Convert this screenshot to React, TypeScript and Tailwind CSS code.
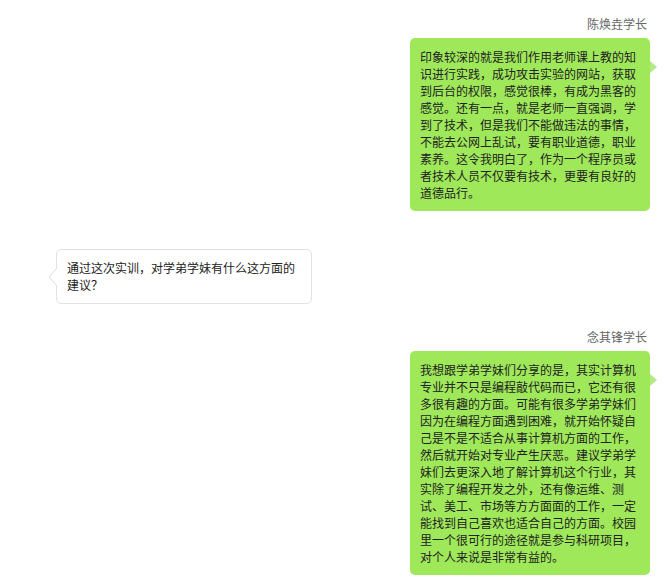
const FONT = "font-['SimSun','Noto_Sans_CJK_SC',sans-serif]";

function RightMessage({ name, text, className = "" }: { name: string; text: string; className?: string }) {
  return (
    <div className={`flex flex-col items-end pr-[20px] ${className}`}>
      <div className="pr-[3px] text-[12px] leading-[20px] text-[#666]">{name}</div>
      <div className="relative mt-[4px] w-[240px] rounded-[5px] bg-[#9fe85a] px-[10px] py-[10px] text-[12px] leading-[17px] text-[#222]">
        {text}
        <span className="absolute right-[-7px] top-[23px] h-0 w-0 border-y-[6px] border-l-[7px] border-y-transparent border-l-[#b4ea86]" />
      </div>
    </div>
  );
}

function LeftMessage({ text, className = "" }: { text: string; className?: string }) {
  return (
    <div className={`pl-[56px] ${className}`}>
      <div className="relative w-[256px] rounded-[5px] border border-[#e2e2e2] bg-white pb-[10px] pl-[10px] pr-[10px] pt-[9px] text-[12px] leading-[17px] text-[#222]">
        {text}
        <svg className="absolute left-[-9px] top-[18px]" width="9" height="18" viewBox="0 0 9 18">
          <polyline points="9,0 1,9 9,18" fill="#fff" stroke="#dcdcdc" strokeWidth="1" />
          <rect x="8.5" y="1" width="1" height="16" fill="#fff" />
        </svg>
      </div>
    </div>
  );
}

export default function App() {
  return (
    <div className={`min-h-[579px] w-[670px] bg-white pt-[14px] ${FONT}`}>
      <RightMessage
        name="陈焕垚学长"
        text="印象较深的就是我们作用老师课上教的知识进行实践，成功攻击实验的网站，获取到后台的权限，感觉很棒，有成为黑客的感觉。还有一点，就是老师一直强调，学到了技术，但是我们不能做违法的事情，不能去公网上乱试，要有职业道德，职业素养。这令我明白了，作为一个程序员或者技术人员不仅要有技术，更要有良好的道德品行。"
      />
      <LeftMessage className="mt-[38px]" text="通过这次实训，对学弟学妹有什么这方面的建议？" />
      <RightMessage
        className="mt-[23px]"
        name="念其锋学长"
        text="我想跟学弟学妹们分享的是，其实计算机专业并不只是编程敲代码而已，它还有很多很有趣的方面。可能有很多学弟学妹们因为在编程方面遇到困难，就开始怀疑自己是不是不适合从事计算机方面的工作，然后就开始对专业产生厌恶。建议学弟学妹们去更深入地了解计算机这个行业，其实除了编程开发之外，还有像运维、测试、美工、市场等方方面面的工作，一定能找到自己喜欢也适合自己的方面。校园里一个很可行的途径就是参与科研项目，对个人来说是非常有益的。"
      />
    </div>
  );
}
